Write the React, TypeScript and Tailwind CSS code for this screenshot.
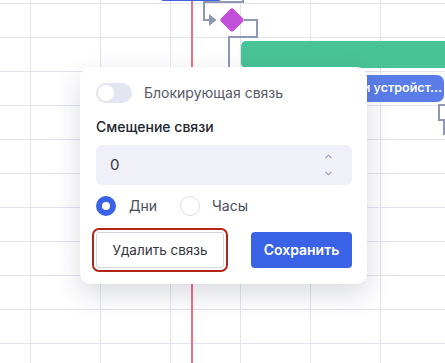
import { ChevronUp, ChevronDown } from "lucide-react";

const cols = [30, 100, 170, 240, 310, 380];
const rows = [3, 37, 71, 105, 139, 173, 207, 241, 275, 309, 343];

const Chart = () => {
  return (
    <div className="absolute inset-0">
      {/* grid + connectors */}
      <svg className="absolute inset-0" width={445} height={363}>
        {cols.map((x) => (
          <line key={"c" + x} x1={x + 0.5} y1={0} x2={x + 0.5} y2={363} stroke="#e4e4ef" strokeWidth={1} />
        ))}
        {rows.map((y) => (
          <line key={"r" + y} x1={0} y1={y + 0.5} x2={445} y2={y + 0.5} stroke="#e4e4ef" strokeWidth={1} />
        ))}
        <path d="M243 0 V2 H204 V20 H210" fill="none" stroke="#8f97b4" strokeWidth={2} />
        <path d="M209 14 L216.5 20 L209 26 Z" fill="#8f97b4" />
        <path d="M244 20 H257 V37 H229 V80" fill="none" stroke="#8f97b4" strokeWidth={2} />
        <path d="M445 105 H439 V120 H444 V135" fill="none" stroke="#8f97b4" strokeWidth={2} />
        <rect x={191} y={0} width={2} height={363} fill="#f26d88" />
      </svg>

      {/* bars */}
      <div className="absolute left-[160px] top-[-20px] w-[62px] h-[21px] rounded-b-[4px] bg-[#3f63de]" />
      <div className="absolute left-[222.5px] top-[11px] w-[18px] h-[18px] rotate-45 rounded-[3px] bg-[#c14fd7]" />
      <div className="absolute left-[241px] top-[41px] w-[220px] h-[27px] rounded-l-[5px] bg-[#48c397]" />
      <div className="absolute left-[300px] top-[75px] w-[144px] h-[27px] rounded-[7px] bg-[#5a7de9] flex items-center justify-end pr-[2px] overflow-hidden">
        <span className="whitespace-nowrap text-white text-[12.5px] font-semibold">сети и устройст...</span>
      </div>
    </div>
  );
};

const Popup = () => {
  return (
    <div className="absolute left-[80px] top-[67px] w-[287px] rounded-[10px] bg-white pl-4 pr-[15px] pt-4 pb-4 shadow-[0_10px_28px_rgba(30,35,70,0.17)]">
      <div className="flex items-center gap-3 h-5">
        <div className="w-9 h-5 rounded-full bg-[#e3e6f1] flex items-center px-[2px]">
          <div className="w-4 h-4 rounded-full bg-white" />
        </div>
        <span className="text-sm text-[#555866]">Блокирующая связь</span>
      </div>

      <div className="mt-[14px] h-5 leading-5 text-sm font-medium text-[#23252e]">Смещение связи</div>

      <div className="mt-2 h-10 rounded-[6px] bg-[#f0f1f8] flex items-center justify-between pl-[14px] pr-[18px]">
        <span className="text-[15px] text-[#33353d]">0</span>
        <div className="flex flex-col items-center gap-[6px] text-[#9ba1ba]">
          <ChevronUp className="w-[11px] h-[11px]" strokeWidth={2.6} />
          <ChevronDown className="w-[11px] h-[11px]" strokeWidth={2.6} />
        </div>
      </div>

      <div className="mt-[11px] flex items-center h-5">
        <div className="w-5 h-5 rounded-full border-[6px] border-[#3a62e6] bg-white" />
        <span className="ml-[13px] text-sm text-[#4a4d59]">Дни</span>
        <div className="ml-[23px] w-5 h-5 rounded-full border border-[#dbdfe9] bg-white" />
        <span className="ml-3 text-sm text-[#4a4d59]">Часы</span>
      </div>

      <div className="mt-4 flex items-center justify-between">
        <button className="w-[128px] h-9 rounded-[3px] border border-[#d1d5df] bg-white text-[13.5px] text-[#34363e] outline-2 outline-offset-2 outline-[#b3241a]">
          Удалить связь
        </button>
        <button className="w-[101px] h-9 rounded-[4px] bg-[#3a62e6] text-sm font-semibold text-white">
          Сохранить
        </button>
      </div>
    </div>
  );
};

export default function App() {
  return (
    <div className="relative w-[445px] h-[363px] overflow-hidden bg-white font-['Inter',sans-serif]">
      <Chart />
      <Popup />
    </div>
  );
}
